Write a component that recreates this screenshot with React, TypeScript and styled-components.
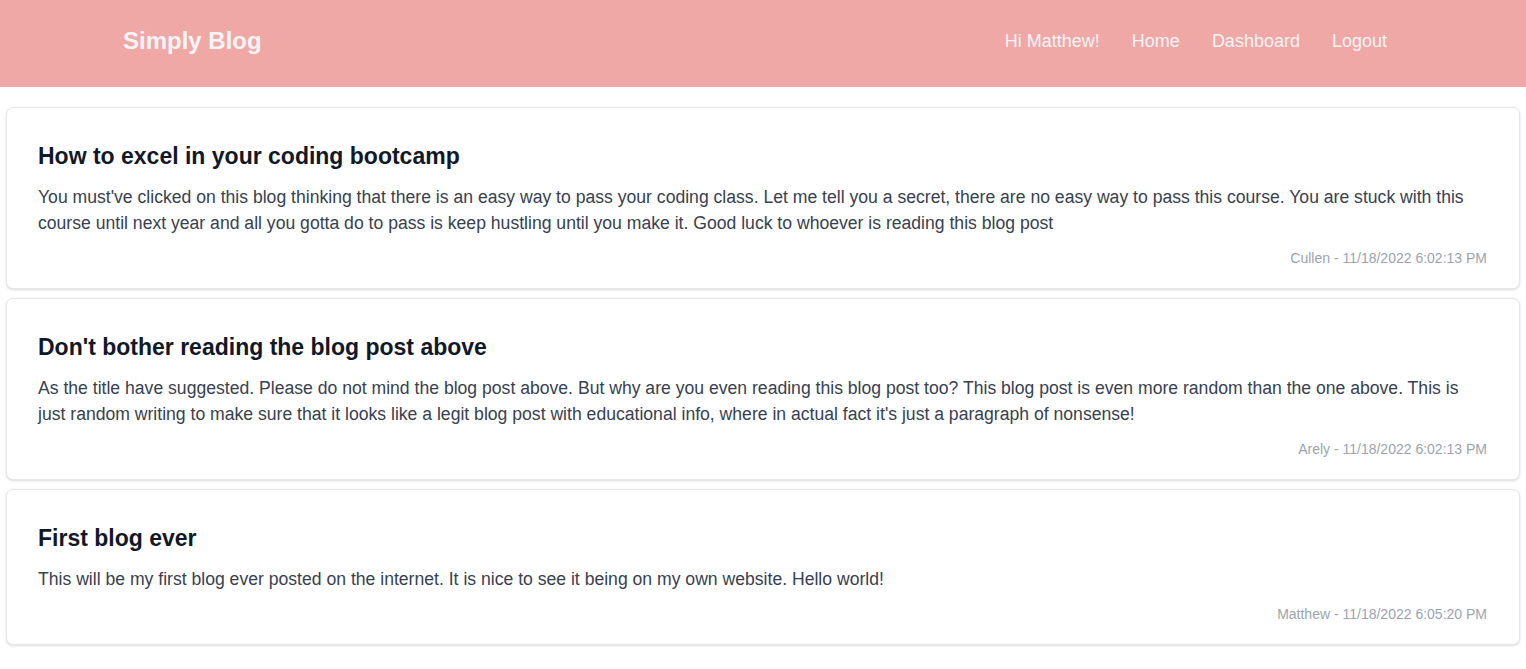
import React from "react";
import styled, { createGlobalStyle } from "styled-components";

const Global = createGlobalStyle`
  html, body { margin: 0; padding: 0; background: #ffffff; }
  body { font-family: "Liberation Sans", Arial, Helvetica, sans-serif; }
  * { box-sizing: border-box; }
`;

const Header = styled.header`
  height: 87px;
  background: #f0a8a7;
  display: flex;
  align-items: center;
  justify-content: space-between;
  padding: 0 123px 5px 123px;
`;

const Brand = styled.a`
  font-size: 24px;
  font-weight: 700;
  color: #f3f4f6;
  text-decoration: none;
`;

const Nav = styled.nav`
  display: flex;
  align-items: center;
`;

const NavLink = styled.a`
  font-size: 18px;
  color: #f3f4f6;
  text-decoration: none;
  padding: 0 16px;
`;

const Main = styled.main`
  display: flex;
  flex-direction: column;
  gap: 9px;
  padding: 20px 6px 20px 6px;
`;

const Card = styled.article`
  background: #ffffff;
  border: 1px solid #e5e7eb;
  border-radius: 7px;
  box-shadow: 0 1px 3px 0 rgba(0, 0, 0, 0.12), 0 1px 2px -1px rgba(0, 0, 0, 0.1);
  padding: 32px 32px 20px 31px;
  display: flex;
  flex-direction: column;
`;

const Title = styled.h2`
  margin: 0;
  font-size: 23px;
  line-height: 32px;
  font-weight: 700;
  color: #111827;
`;

const Body = styled.p`
  margin: 12px 0 0 0;
  font-size: 17.6px;
  line-height: 26px;
  color: #374151;
`;

const Meta = styled.div`
  margin-top: 12px;
  font-size: 14px;
  line-height: 20px;
  color: #9ca3af;
  text-align: right;
`;

const posts = [
  {
    title: "How to excel in your coding bootcamp",
    body: "You must've clicked on this blog thinking that there is an easy way to pass your coding class. Let me tell you a secret, there are no easy way to pass this course. You are stuck with this course until next year and all you gotta do to pass is keep hustling until you make it. Good luck to whoever is reading this blog post",
    meta: "Cullen - 11/18/2022 6:02:13 PM",
  },
  {
    title: "Don't bother reading the blog post above",
    body: "As the title have suggested. Please do not mind the blog post above. But why are you even reading this blog post too? This blog post is even more random than the one above. This is just random writing to make sure that it looks like a legit blog post with educational info, where in actual fact it's just a paragraph of nonsense!",
    meta: "Arely - 11/18/2022 6:02:13 PM",
  },
  {
    title: "First blog ever",
    body: "This will be my first blog ever posted on the internet. It is nice to see it being on my own website. Hello world!",
    meta: "Matthew - 11/18/2022 6:05:20 PM",
  },
];

export default function App() {
  return (
    <>
      <Global />
      <Header>
        <Brand href="#">Simply Blog</Brand>
        <Nav>
          <NavLink href="#">Hi Matthew!</NavLink>
          <NavLink href="#">Home</NavLink>
          <NavLink href="#">Dashboard</NavLink>
          <NavLink href="#">Logout</NavLink>
        </Nav>
      </Header>
      <Main>
        {posts.map((p) => (
          <Card key={p.title}>
            <Title>{p.title}</Title>
            <Body>{p.body}</Body>
            <Meta>{p.meta}</Meta>
          </Card>
        ))}
      </Main>
    </>
  );
}
